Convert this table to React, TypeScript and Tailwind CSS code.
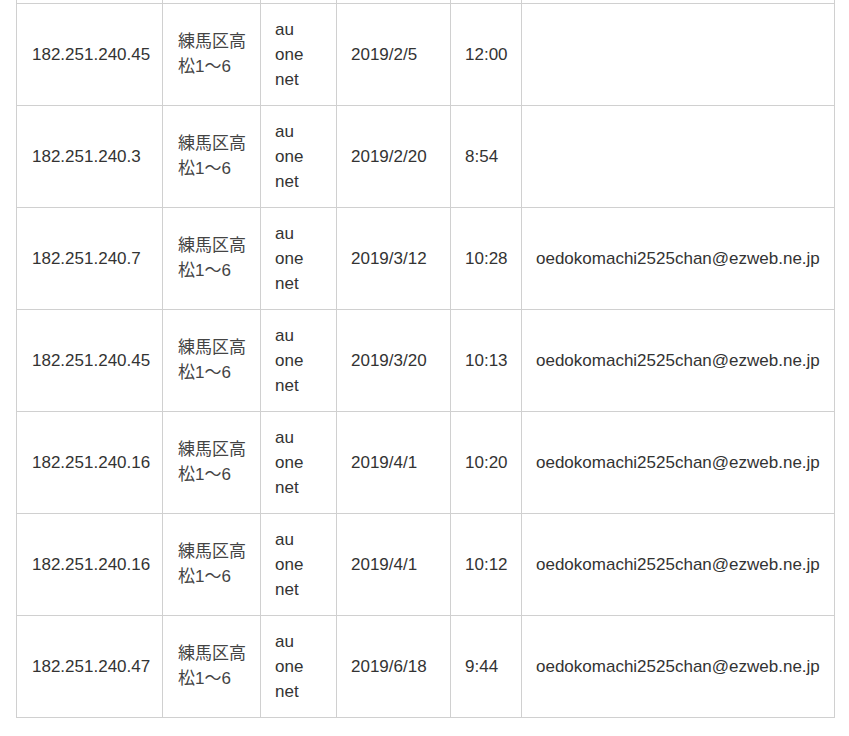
import React from 'react';

const rows = [
  { ip: '182.251.240.45', date: '2019/2/5', time: '12:00', mail: '' },
  { ip: '182.251.240.3', date: '2019/2/20', time: '8:54', mail: '' },
  { ip: '182.251.240.7', date: '2019/3/12', time: '10:28', mail: 'oedokomachi2525chan@ezweb.ne.jp' },
  { ip: '182.251.240.45', date: '2019/3/20', time: '10:13', mail: 'oedokomachi2525chan@ezweb.ne.jp' },
  { ip: '182.251.240.16', date: '2019/4/1', time: '10:20', mail: 'oedokomachi2525chan@ezweb.ne.jp' },
  { ip: '182.251.240.16', date: '2019/4/1', time: '10:12', mail: 'oedokomachi2525chan@ezweb.ne.jp' },
  { ip: '182.251.240.47', date: '2019/6/18', time: '9:44', mail: 'oedokomachi2525chan@ezweb.ne.jp' },
];

const cell = 'border border-[#d0d0d0] pl-[14px] pr-[15px] py-[13px] align-middle';

const App = () => {
  return (
    <div
      className="min-h-screen bg-white px-4 text-[17px] leading-[25px] text-[#333]"
      style={{ fontFamily: '"Liberation Sans", Arial, "Noto Sans CJK JP", sans-serif' }}
    >
      <table className="w-[818px] table-fixed border-collapse">
        <colgroup>
          <col className="w-[146px]" />
          <col className="w-[98px]" />
          <col className="w-[76px]" />
          <col className="w-[114px]" />
          <col className="w-[71px]" />
          <col className="w-[313px]" />
        </colgroup>
        <tbody>
          {/* tail of the row scrolled out above */}
          <tr className="h-[3px]">
            {[0, 1, 2, 3, 4, 5].map((i) => (
              <td key={i} className="border-x border-[#d0d0d0] p-0"></td>
            ))}
          </tr>
          {rows.map((r, i) => (
            <tr key={i} className="h-[102px]">
              <td className="border border-[#d0d0d0] px-[15px] py-[13px] align-middle">{r.ip}</td>
              <td className="border border-[#d0d0d0] py-[13px] pl-[15px] pr-[12px] align-middle text-[#444]">
                練馬区高松1〜6
              </td>
              <td className={cell}>au one net</td>
              <td className={cell}>{r.date}</td>
              <td className={cell}>{r.time}</td>
              <td className={cell}>{r.mail}</td>
            </tr>
          ))}
        </tbody>
      </table>
    </div>
  );
};

export default App;
